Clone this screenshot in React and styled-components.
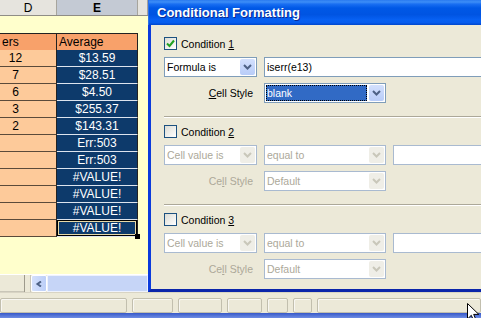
import styled, { createGlobalStyle } from "styled-components";

const GlobalStyle = createGlobalStyle`
  html, body { margin: 0; padding: 0; }
  body {
    width: 481px;
    height: 318px;
    overflow: hidden;
    background: #ece9d8;
    font-family: "Liberation Sans", Arial, sans-serif;
  }
`;

const Screen = styled.div`
  position: relative;
  width: 481px;
  height: 318px;
  overflow: hidden;
  display: flex;
  flex-direction: column;
`;

const Workspace = styled.div`
  display: grid;
  grid-template-columns: 148px 370px;
  height: 292px;
`;

/* ---------- spreadsheet ---------- */

const Sheet = styled.div`
  display: flex;
  flex-direction: column;
  background: #ffffcc;
  font-size: 12px;
  color: #000;
  min-width: 0;
`;

const ColumnHeads = styled.div`
  display: grid;
  grid-template-columns: 57px 81px 1fr;
  height: 16px;
  box-sizing: border-box;
  border-bottom: 1px solid #8f8d86;
`;

const ColHead = styled.div`
  display: flex;
  align-items: center;
  justify-content: center;
  background: ${p => (p.$active ? "#c4cad4" : "#e6e4de")};
  border-right: 1px solid #a7a59d;
  font-weight: ${p => (p.$active ? 700 : 400)};
`;

const SheetRow = styled.div`
  display: grid;
  grid-template-columns: 57px 81px 1fr;
  height: 17px;
`;

const cellLook = {
  head: "background:#f8a16a; border-top:1px solid #222; border-bottom:1px solid #222; border-right:1px solid #222; text-align:left; padding-left:2px;",
  count: "background:#fdca9a; border-bottom:1px solid #5a4a3a; border-right:1px solid #222; text-align:center; padding-right:25px;",
  avg: "background:#0d3a6b; color:#fff; border-bottom:1px solid #dde4ee; border-right:1px solid #222; text-align:center;",
  blank: "",
};

const Cell = styled.div`
  position: relative;
  box-sizing: border-box;
  line-height: 16px;
  white-space: nowrap;
  overflow: visible;
  ${p => cellLook[p.$kind]}
  ${p =>
    p.$selected &&
    `
    box-shadow: inset 0 0 0 1px #000, inset 0 0 0 2px #e6d9a8;
    &::after {
      content: "";
      position: absolute;
      right: -3px;
      bottom: -3px;
      width: 5px;
      height: 5px;
      background: #000;
    }
  `}
`;

const SheetFill = styled.div`
  flex: 1;
`;

const HScroll = styled.div`
  display: flex;
  height: 18px;
  background: #ece9d8;
  box-sizing: border-box;
  border-top: 1px solid #fff;
`;

const TabStrip = styled.div`
  width: 24px;
  border-right: 1px solid #9d9a8c;
  box-shadow: inset 0 -1px #c9c6b8;
`;

const Splitter = styled.div`
  width: 5px;
  border-right: 1px solid #c9c6b8;
`;

const ScrollBtn = styled.div`
  width: 16px;
  display: flex;
  align-items: center;
  justify-content: center;
  background: linear-gradient(90deg, #d4e0fc, #bccff8);
  border: 1px solid #fff;
  box-sizing: border-box;
  border-radius: 2px;
`;

const ScrollTrack = styled.div`
  flex: 1;
  background: #c6d5f7;
  border: 1px solid #eef2fd;
  box-sizing: border-box;
`;

/* ---------- dialog ---------- */

const Dialog = styled.section`
  display: flex;
  flex-direction: column;
  min-width: 0;
`;

const TitleBar = styled.header`
  flex: none;
  height: 25px;
  display: flex;
  align-items: center;
  padding-left: 8px;
  background: linear-gradient(
    #2a7af0 0%,
    #3d8ef7 8%,
    #1a6ff2 16%,
    #0058e6 32%,
    #0054e2 58%,
    #0760f2 78%,
    #065cee 90%,
    #0046cc 100%
  );
  border-left: 1px solid #2f6fe6;
  color: #fff;
  font-weight: 700;
  font-size: 13px;
  text-shadow: 1px 1px 0 #0b2a92;
`;

const Body = styled.div`
  flex: 1;
  background: #ece9d8;
  border-left: 3px solid #0b3bdc;
  border-bottom: 3px solid #0a25aa;
  padding: 12px 0 0 13px;
  font-size: 10.5px;
  color: #000;
`;

const Block = styled.div`
  display: flex;
  flex-direction: column;
`;

const CheckRow = styled.label`
  display: flex;
  align-items: center;
  gap: 4px;
  height: 13px;
  margin-bottom: 7px;
`;

const CheckBox = styled.span`
  width: 13px;
  height: 13px;
  box-sizing: border-box;
  border: 1px solid #1c5180;
  background: linear-gradient(135deg, #dcdcd4, #fff);
  display: flex;
  align-items: center;
  justify-content: center;
`;

const FieldRow = styled.div`
  display: grid;
  grid-template-columns: 93px 122px 1fr;
  column-gap: 7px;
  height: 20px;
  margin-top: ${p => (p.$second ? "6px" : "0")};
`;

const ComboBox = styled.div`
  display: flex;
  box-sizing: border-box;
  height: 20px;
  padding: 1px;
  gap: 1px;
  background: #fff;
  border: 1px solid ${p => (p.$off ? "#a9bad0" : "#7f9db9")};
`;

const ComboText = styled.span`
  flex: 1;
  display: flex;
  align-items: center;
  padding-left: 1px;
  white-space: nowrap;
  overflow: hidden;
  color: ${p => (p.$off ? "#aca899" : p.$picked ? "#fff" : "#000")};
  ${p => p.$picked && "background:#316ac5; outline:1px dotted #000; outline-offset:-1px; margin-right:1px;"}
`;

const ComboButton = styled.span`
  width: 15px;
  display: flex;
  align-items: center;
  justify-content: center;
  border-radius: 2px;
  background: ${p => (p.$off ? "#efeee7" : "linear-gradient(#d3e0fd, #b8ccf8)")};
`;

const TextBox = styled.div`
  grid-column: ${p => (p.$wide ? "2 / 4" : "auto")};
  box-sizing: border-box;
  height: 20px;
  display: flex;
  align-items: center;
  padding-left: 2px;
  background: #fff;
  border: 1px solid ${p => (p.$off ? "#a9bad0" : "#7f9db9")};
`;

const FieldLabel = styled.span`
  display: flex;
  align-items: center;
  justify-content: flex-end;
  padding-right: 4px;
  color: ${p => (p.$off ? "#aca899" : "#000")};
`;

const Rule = styled.hr`
  height: 0;
  margin: 13px 0 7px;
  border: 0;
  border-top: 1px solid #aca899;
  border-bottom: 1px solid #fff;
`;

/* ---------- status / taskbar ---------- */

const StatusBar = styled.footer`
  flex: none;
  display: flex;
  gap: 5px;
  height: 21px;
  box-sizing: border-box;
  padding-top: 5px;
  background: #ece9d8;
  border-top: 1px solid #d8d4c4;
`;

const StatusCell = styled.div`
  flex: ${p => (p.$w ? `0 0 ${p.$w}px` : "1")};
  box-sizing: border-box;
  border: 1px solid #c2bfae;
  border-radius: 2px;
  box-shadow: inset 1px 1px #f8f7f2;
`;

const Taskbar = styled.div`
  flex: none;
  height: 5px;
  background: linear-gradient(#3658c8, #6f8de4);
`;

const Pointer = styled.svg`
  position: absolute;
  left: 467px;
  top: 303px;
`;

const Chevron = ({ color, flip }) => (
  <svg width="9" height="6" viewBox="0 0 9 6">
    <path
      d={flip ? "M6 0.5 L2.5 3 L6 5.5" : "M1 1 L4.5 4.5 L8 1"}
      fill="none"
      stroke={color}
      strokeWidth="2"
    />
  </svg>
);

const data = [
  ["12", "$13.59"],
  ["7", "$28.51"],
  ["6", "$4.50"],
  ["3", "$255.37"],
  ["2", "$143.31"],
  ["", "Err:503"],
  ["", "Err:503"],
  ["", "#VALUE!"],
  ["", "#VALUE!"],
  ["", "#VALUE!"],
  ["", "#VALUE!"],
];

const conditions = [
  { n: "1", on: true, mode: "Formula is", formula: "iserr(e13)", style: "blank", label: <><u>C</u>ell Style</> },
  { n: "2", on: false, mode: "Cell value is", style: "Default", label: <>Ce<u>l</u>l Style</> },
  { n: "3", on: false, mode: "Cell value is", style: "Default", label: <>Ce<u>l</u>l Style</> },
];

function Combo({ text, off, picked }) {
  return (
    <ComboBox $off={off}>
      <ComboText $off={off} $picked={picked}>{text}</ComboText>
      <ComboButton $off={off}>
        <Chevron color={off ? "#c9c7ba" : "#4d6185"} />
      </ComboButton>
    </ComboBox>
  );
}

function Condition({ c }) {
  let off = !c.on;
  return (
    <Block>
      <CheckRow>
        <CheckBox>
          {c.on && (
            <svg width="9" height="9" viewBox="0 0 9 9">
              <path d="M1 4.5 L3.5 7 L8 1.5" fill="none" stroke="#21a121" strokeWidth="2" />
            </svg>
          )}
        </CheckBox>
        <span>Condition <u>{c.n}</u></span>
      </CheckRow>
      <FieldRow>
        <Combo text={c.mode} off={off} />
        {c.formula ? (
          <TextBox $wide>{c.formula}</TextBox>
        ) : (
          <>
            <Combo text="equal to" off={off} />
            <TextBox $off={off} />
          </>
        )}
      </FieldRow>
      <FieldRow $second>
        <FieldLabel $off={off}>{c.label}</FieldLabel>
        <Combo text={c.style} off={off} picked={c.on} />
      </FieldRow>
    </Block>
  );
}

export default function App() {
  return (
    <Screen>
      <GlobalStyle />
      <Workspace>
        <Sheet>
          <ColumnHeads>
            <ColHead>D</ColHead>
            <ColHead $active>E</ColHead>
            <ColHead />
          </ColumnHeads>
          <SheetRow>
            <Cell $kind="blank" />
          </SheetRow>
          <SheetRow>
            <Cell $kind="head">ers</Cell>
            <Cell $kind="head">Average</Cell>
          </SheetRow>
          {data.map(([d, e], i) => (
            <SheetRow key={i}>
              <Cell $kind="count">{d}</Cell>
              <Cell $kind="avg" $selected={i === data.length - 1}>{e}</Cell>
            </SheetRow>
          ))}
          <SheetFill />
          <HScroll>
            <TabStrip />
            <Splitter />
            <ScrollBtn>
              <Chevron color="#4d6185" flip />
            </ScrollBtn>
            <ScrollTrack />
          </HScroll>
        </Sheet>

        <Dialog>
          <TitleBar>Conditional Formatting</TitleBar>
          <Body>
            {conditions.map((c, i) => (
              <div key={c.n}>
                {i > 0 && <Rule />}
                <Condition c={c} />
              </div>
            ))}
          </Body>
        </Dialog>
      </Workspace>

      <StatusBar>
        <StatusCell $w={127} />
        <StatusCell $w={41} />
        <StatusCell $w={44} />
        <StatusCell $w={35} />
        <StatusCell $w={21} />
        <StatusCell $w={19} />
        <StatusCell />
      </StatusBar>
      <Taskbar />

      <Pointer width="13" height="20" viewBox="0 0 13 20">
        <path d="M0.5 0.5 L0.5 16 L4.3 12.3 L7 18.5 L9.3 17.5 L6.7 11.4 L11.8 11.4 Z" fill="#fff" stroke="#000" strokeWidth="1" />
      </Pointer>
    </Screen>
  );
}
